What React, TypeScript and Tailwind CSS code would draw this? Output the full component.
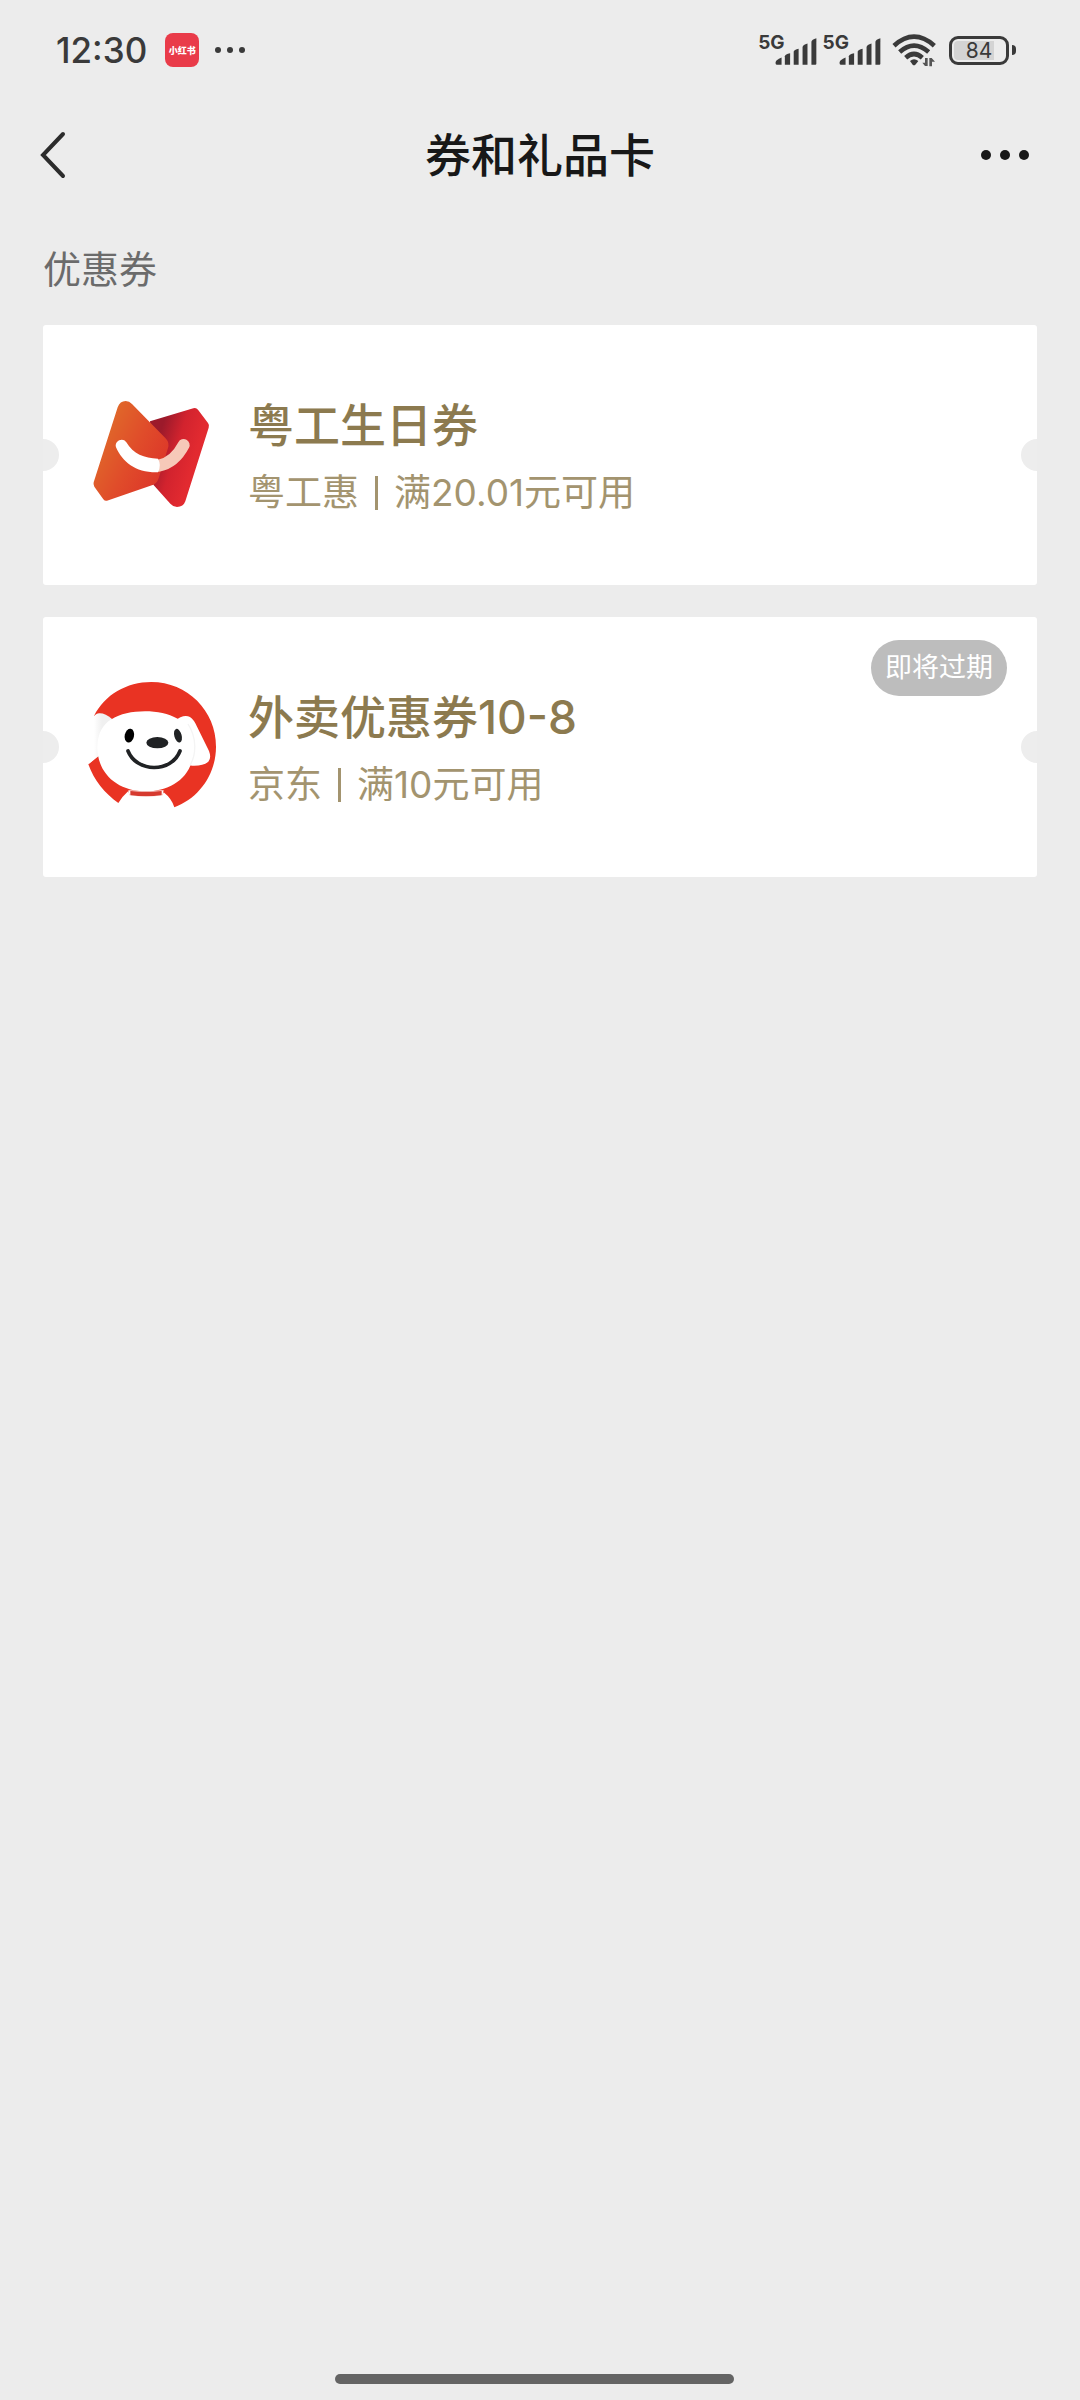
import type { ReactNode } from 'react';

interface Coupon {
  id: string;
  title: string;
  merchant: string;
  condition: string;
  logo: ReactNode;
  tag?: string;
}

function YuegongLogo() {
  return (
    <svg viewBox="168 240 390 390" className="w-[130px] h-[130px] shrink-0" role="img" aria-label="粤工惠">
      <defs>
        <linearGradient id="yg-left" x1="200" y1="400" x2="400" y2="500" gradientUnits="userSpaceOnUse">
          <stop offset="0" stopColor="#e0682a" />
          <stop offset="0.5" stopColor="#e04c2a" />
          <stop offset="1" stopColor="#dc3529" />
        </linearGradient>
        <linearGradient id="yg-right" x1="375" y1="420" x2="490" y2="455" gradientUnits="userSpaceOnUse">
          <stop offset="0" stopColor="#9c1a2b" />
          <stop offset="0.5" stopColor="#d2232e" />
          <stop offset="1" stopColor="#e22a30" />
        </linearGradient>
      </defs>
      <path
        d="M360 334 L490 295 Q498 292 504 299 L534 339 Q539 345 536 353 L466 574 Q460 591 441 591 Q430 591 421 581 L370 524 Z"
        fill="url(#yg-right)"
      />
      <path
        d="M263 292 Q270 273 287 273 Q298 273 306 282 L408 386 Q419 398 414 414 L386 505 Q382 519 370 524 L231 572 Q225 574 220 568 L193 530 Q189 524 191 517 Z"
        fill="url(#yg-left)"
      />
      <path d="M387 467 Q434 457 461 405" fill="none" stroke="#f6c9b9" strokeWidth="36" strokeLinecap="round" />
      <path
        d="M258 412 C252 394 278 380 289 397 C310 432 342 445 384 446 Q395 465 384 487 C318 489 278 457 258 412 Z"
        fill="#fff"
      />
    </svg>
  );
}

function JdLogo() {
  return (
    <svg viewBox="168 246 390 390" className="w-[130px] h-[130px] shrink-0" role="img" aria-label="京东">
      <defs>
        <linearGradient id="jd-ear" x1="176" y1="0" x2="216" y2="0" gradientUnits="userSpaceOnUse">
          <stop offset="0" stopColor="#fff" />
          <stop offset="0.4" stopColor="#fff" />
          <stop offset="1" stopColor="#f0f0f0" />
        </linearGradient>
      </defs>
      <path
        d="M192 348 C224 284 290 246 364 246 C472 246 558 332 558 440 C558 522 508 594 433 622 Q425 596 401 577 L397 586 Q350 594 299 586 L295 573 Q278 588 265 609 C224 580 192 541 175 493 L204 468 Z"
        fill="#e93323"
      />
      <path d="M246 357 Q226 339 207 340 Q194 342 186 356 L166 440 L176 492 L206 468 L240 400 Z" fill="url(#jd-ear)" />
      <path
        d="M432 364 Q458 344 474 349 Q486 352 496 370 L537 453 Q545 474 535 485 Q519 499 484 497 Z"
        fill="#fff"
      />
      <path
        d="M246 357 C290 327 392 325 440 355 C474 371 492 402 492 440 C492 530 425 574 347 574 C262 574 202 520 202 442 C202 402 218 372 246 357 Z"
        fill="#fff"
      />
      <path d="M474 372 C500 412 500 462 480 496" fill="none" stroke="#f4f4f4" strokeWidth="4" />
      <path d="M295 571 L299 588 Q348 594 397 588 L401 571 Q348 576 295 571 Z" fill="#fff" />
      <path d="M301 573 Q348 577 395 573 L395 586 Q348 592 301 586 Z" fill="#d63a2f" />
      <ellipse cx="298" cy="407" rx="14" ry="21" transform="rotate(12 298 407)" fill="#000" />
      <ellipse cx="444" cy="407" rx="11" ry="21" transform="rotate(-16 444 407)" fill="#202224" />
      <ellipse cx="382" cy="428" rx="33" ry="17" fill="#202224" />
      <path d="M294 453 C320 518 424 520 450 453" fill="none" stroke="#202224" strokeWidth="11" strokeLinecap="round" />
    </svg>
  );
}

const COUPONS: Coupon[] = [
  {
    id: 'yuegong-birthday',
    title: '粤工生日券',
    merchant: '粤工惠',
    condition: '满20.01元可用',
    logo: <YuegongLogo />,
  },
  {
    id: 'jd-takeout',
    title: '外卖优惠券10-8',
    merchant: '京东',
    condition: '满10元可用',
    logo: <JdLogo />,
    tag: '即将过期',
  },
];

function Signal() {
  return (
    <div className="flex items-start h-[30px]">
      <span className="text-[19px] leading-[16px] font-bold -mr-[10px]">5G</span>
      <svg viewBox="106 40 128 90" className="w-[42px] h-[30px]" fill="#3a3a3a" aria-hidden="true">
        <path d="M108 122 Q108 116 126 108 V130 H112 Q108 130 108 126 Z" />
        <path d="M136 104 Q137 98 152 95 V130 H136 Z" />
        <path d="M163 90 Q164 84 178 81 V130 H163 Z" />
        <path d="M190 76 Q191 69 205 65 V130 H190 Z" />
        <path d="M217 60 Q218 53 232 49 V127 Q232 130 229 130 H217 Z" />
      </svg>
    </div>
  );
}

function WifiIcon() {
  return (
    <svg viewBox="455 38 135 105" className="w-[45px] h-[35px]" aria-label="Wi-Fi" role="img">
      <g fill="none" stroke="#3a3a3a" strokeWidth="14">
        <path d="M461 76 Q521 22 582 76" />
        <path d="M478 95 Q521 57 565 95" />
        <path d="M496 112 Q521 90 546 112" />
      </g>
      <path d="M509 122 Q521 112 534 122 L525 133 Q521 137 517 133 Z" fill="#3a3a3a" />
      <path d="M562 113 V137 H554 L546 127 H554 V113 Z M567 138 V113 H574 L584 124 H575 V138 Z" fill="#555" />
    </svg>
  );
}

function StatusBar() {
  return (
    <div className="flex items-center justify-between h-[100px] pl-14 pr-16 text-[#3a3a3a]">
      <div className="flex items-center">
        <time className="text-[35px] leading-10 font-medium">12:30</time>
        <span className="ml-[18px] flex items-center justify-center w-[34px] h-[34px] rounded-lg bg-[#e93b49] text-[9px] leading-none font-black text-white">
          小红书
        </span>
        <span className="ml-4 flex gap-[6px]">
          <i className="w-[6px] h-[6px] rounded-full bg-[#3a3a3a]" />
          <i className="w-[6px] h-[6px] rounded-full bg-[#3a3a3a]" />
          <i className="w-[6px] h-[6px] rounded-full bg-[#3a3a3a]" />
        </span>
      </div>
      <div className="flex items-center">
        <div className="flex gap-[6px]">
          <Signal />
          <Signal />
        </div>
        <span className="ml-[11px]">
          <WifiIcon />
        </span>
        <div className="ml-3 flex items-center gap-[3px]">
          <div className="w-[60px] h-[29px] rounded-[9px] border-[3px] border-[#3a3a3a] p-[2px]">
            <div className="flex items-center justify-center h-full rounded-[4px] bg-linear-to-r from-[#d4d4d4] from-80% to-transparent to-80% text-[21px] leading-none">
              84
            </div>
          </div>
          <span className="w-1 h-[10px] rounded-r-sm bg-[#3a3a3a]" />
        </div>
      </div>
    </div>
  );
}

function NavBar() {
  return (
    <header className="grid grid-cols-[1fr_auto_1fr] items-center h-[110px] px-[37px]">
      <button type="button" aria-label="返回" className="justify-self-start">
        <svg viewBox="0 0 32 52" className="w-8 h-[52px]" aria-hidden="true">
          <path d="M26 5 L6 26 L26 47" fill="none" stroke="#2c2c2c" strokeWidth="4" strokeLinecap="round" />
        </svg>
      </button>
      <h1 className="text-[46px] leading-[60px] font-medium text-[#181818]">券和礼品卡</h1>
      <button type="button" aria-label="更多" className="justify-self-end flex gap-[9px] px-[14px] py-5">
        <i className="w-[10px] h-[10px] rounded-full bg-[#181818]" />
        <i className="w-[10px] h-[10px] rounded-full bg-[#181818]" />
        <i className="w-[10px] h-[10px] rounded-full bg-[#181818]" />
      </button>
    </header>
  );
}

function CouponCard({ coupon }: { coupon: Coupon }) {
  return (
    <li className="relative flex items-center gap-8 px-[43px] py-[60px] bg-white rounded-[3px] overflow-hidden">
      {/* ticket notches */}
      <span className="absolute -left-4 top-1/2 -translate-y-1/2 w-8 h-8 rounded-full bg-[#ededed]" />
      <span className="absolute -right-4 top-1/2 -translate-y-1/2 w-8 h-8 rounded-full bg-[#ededed]" />
      {coupon.logo}
      <div className="pt-1">
        <h3 className="text-[46px] leading-[72px] font-medium text-[#8c7a4f]">{coupon.title}</h3>
        <p className="flex items-center text-[37px] leading-[64px] text-[#a3946f]">
          {coupon.merchant}
          <span className="mx-4 w-[3px] h-[34px] bg-[#a3946f]" />
          {coupon.condition}
        </p>
      </div>
      {coupon.tag && (
        <span className="absolute top-[23px] right-[30px] px-[14px] rounded-full bg-[#bdbdbd] text-[27px] leading-[56px] text-white">
          {coupon.tag}
        </span>
      )}
    </li>
  );
}

export default function App() {
  return (
    <div className="min-h-screen flex flex-col bg-[#ececec] font-[Inter,'Noto_Sans_CJK_SC',sans-serif]">
      <StatusBar />
      <NavBar />
      <main className="flex-1 px-[43px] pt-8">
        <h2 className="text-[38px] leading-[54px] text-[#6b6b6b]">优惠券</h2>
        <ul className="mt-[29px] flex flex-col gap-8">
          {COUPONS.map((coupon) => (
            <CouponCard key={coupon.id} coupon={coupon} />
          ))}
        </ul>
      </main>
      <div className="ml-[31%] mb-4 w-[37%] h-[10px] rounded-full bg-[#646464]" />
    </div>
  );
}
